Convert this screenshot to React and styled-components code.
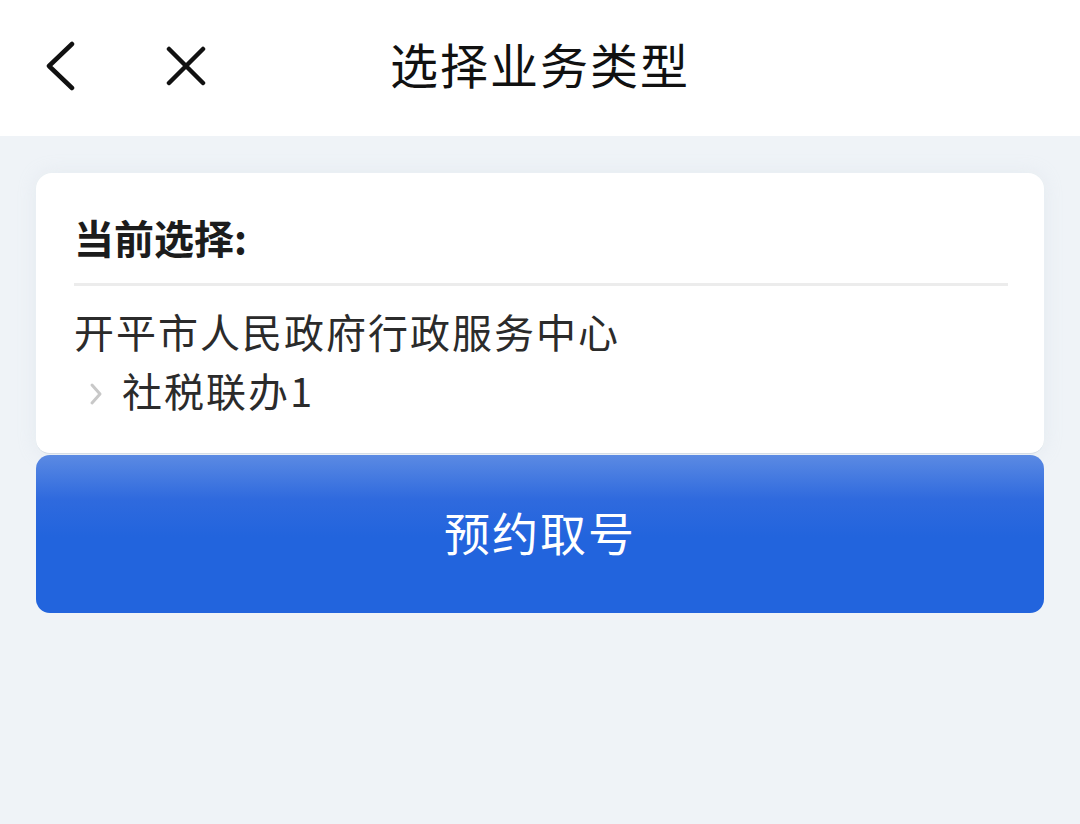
import React from 'react';
import styled, { createGlobalStyle } from 'styled-components';

const GlobalStyle = createGlobalStyle`
	html, body {
		margin: 0;
		padding: 0;
		background: #eff3f7;
		font-family: "Noto Sans CJK SC", "Noto Sans", sans-serif;
	}
`;

const Page = styled.div`
	width: 1080px;
	height: 824px;
	background: #eff3f7;
	display: flex;
	flex-direction: column;
`;

const Header = styled.header`
	height: 136px;
	box-sizing: border-box;
	padding-bottom: 4px;
	background: #fff;
	display: grid;
	grid-template-columns: 1fr auto 1fr;
	align-items: center;
`;

const NavIcons = styled.div`
	display: flex;
	align-items: center;
	gap: 90px;
	padding-left: 44px;
`;

const IconButton = styled.button`
	border: none;
	background: transparent;
	padding: 0;
	display: flex;
	width: ${ ( { w } ) => w }px;
	height: ${ ( { h } ) => h }px;
	color: #111;
	cursor: pointer;
`;

const Title = styled.h1`
	margin: 0;
	font-size: 48px;
	font-weight: 400;
	color: #111;
	letter-spacing: 2px;
	padding-bottom: 6px;
`;

const Content = styled.main`
	padding: 37px 36px 0;
	display: flex;
	flex-direction: column;
`;

const Card = styled.section`
	background: #fff;
	border-radius: 16px 16px 14px 14px;
	padding: 39px 36px 34px 38px;
	box-shadow: 0 0 18px rgba( 200, 210, 222, 0.25 );
	border-bottom: 1px solid #d6dde6;
`;

const Label = styled.div`
	font-size: 40px;
	font-weight: 700;
	color: #1c1c1c;
	line-height: 50px;
	padding-bottom: 21px;
	border-bottom: 3px solid #ececec;
`;

const Path = styled.div`
	padding-top: 17px;
	font-size: 40px;
	color: #2b2b2b;
	line-height: 57px;
	letter-spacing: 2px;
`;

const Step = styled.div`
	display: flex;
	align-items: center;
	gap: 16px;
	padding-left: 12px;
	padding-top: 2px;
`;

const SubmitButton = styled.button`
	margin-top: 1px;
	height: 158px;
	border: none;
	border-radius: 14px;
	background: linear-gradient( 180deg, #5b8ae3 0%, #2f6ade 28%, #2264dd 52%, #2264dd 100% );
	color: #fff;
	font-family: inherit;
	font-size: 46px;
	letter-spacing: 2px;
	cursor: pointer;
	padding: 0 0 6px;
`;

const BackIcon = () => (
	<svg width="32" height="50" viewBox="0 0 32 50" fill="none">
		<path d="M28 3 L5 25 L28 47" stroke="currentColor" strokeWidth="4.5" strokeLinecap="round" strokeLinejoin="round" />
	</svg>
);

const CloseIcon = () => (
	<svg width="40" height="40" viewBox="0 0 40 40" fill="none">
		<path d="M3 3 L37 37 M37 3 L3 37" stroke="currentColor" strokeWidth="4.5" strokeLinecap="round" />
	</svg>
);

const ChevronIcon = () => (
	<svg width="20" height="30" viewBox="0 0 20 30" fill="none">
		<path d="M6 9 L14 18 L6 27" stroke="#c8c8c8" strokeWidth="3" strokeLinecap="round" strokeLinejoin="round" />
	</svg>
);

export default function App() {
	return (
		<Page>
			<GlobalStyle />
			<Header>
				<NavIcons>
					<IconButton w={ 32 } h={ 50 }>
						<BackIcon />
					</IconButton>
					<IconButton w={ 40 } h={ 40 }>
						<CloseIcon />
					</IconButton>
				</NavIcons>
				<Title>选择业务类型</Title>
				<div />
			</Header>
			<Content>
				<Card>
					<Label>当前选择:</Label>
					<Path>
						<div>开平市人民政府行政服务中心</div>
						<Step>
							<ChevronIcon />
							<span>社税联办1</span>
						</Step>
					</Path>
				</Card>
				<SubmitButton>预约取号</SubmitButton>
			</Content>
		</Page>
	);
}
